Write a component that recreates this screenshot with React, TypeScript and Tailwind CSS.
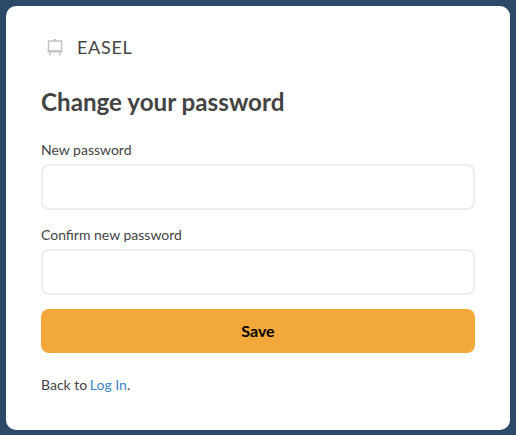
export default function App() {
  return (
    <div className="h-[435px] w-[516px] overflow-hidden bg-[#2c4a67] px-[6px] pt-[6px] font-['Lato','Open_Sans',sans-serif] text-[#444444]">
      <div className="h-[424px] w-[504px] rounded-[10px] bg-white px-[35px] pt-[26px]">
        <div className="flex h-[30px] items-center gap-[13px] pl-[5px]">
          <svg width="18" height="18" viewBox="0 0 18 18" fill="none" stroke="#c4c4c4" strokeWidth="1.500">
            <path d="M9 1v2" stroke="#a8a8a8" />
            <rect x="2.500" y="3" width="13" height="10" fill="#ffffff" />
            <path d="M1.500 13.500h15" strokeWidth="2" />
            <path d="M4.500 14 3.500 17.500M13.500 14l1 3.500" />
          </svg>
          <span className="-translate-y-[0.5px] text-[18px] tracking-[0.7px]">EASEL</span>
        </div>
        <h1 className="mt-[24px] text-[24.200px] leading-[32px] font-bold">Change your password</h1>
        <label className="mt-[22px] block text-[14px] leading-[20px]">New password</label>
        <input className="mt-[4px] block h-[46px] w-[434px] rounded-[8px] border-2 border-[#eeeeee]" />
        <label className="mt-[15px] block text-[14px] leading-[20px]">Confirm new password</label>
        <input className="mt-[4px] block h-[46px] w-[434px] rounded-[8px] border-2 border-[#eeeeee]" />
        <button className="mt-[14px] block h-[44px] w-[434px] rounded-[8px] bg-[#f3a83c] text-[16px] font-bold text-black">Save</button>
        <p className="mt-[22px] text-[14px] leading-[20px]">
          Back to <a className="-ml-[1px] text-[#3d85c6]">Log In</a>.
        </p>
      </div>
    </div>
  );
}
